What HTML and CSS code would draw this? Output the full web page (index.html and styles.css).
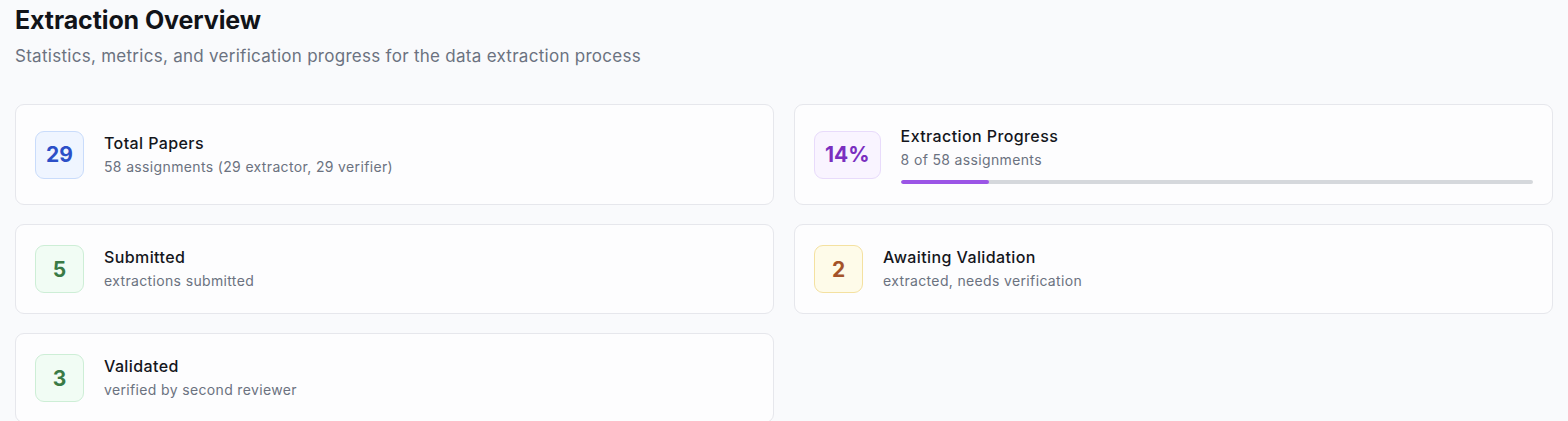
FILE: index.html
```html
<!DOCTYPE html>
<html lang="en">
<head>
    <meta charset="UTF-8">
    <meta name="viewport" content="width=device-width, initial-scale=1.0">
    <title>Extraction Overview</title>
    <link rel="stylesheet" href="styles.css">
</head>
<body>
    <div class="page">
        <!-- Header -->
        <div class="header">
            <h1>Extraction Overview</h1>
            <p class="subtitle">Statistics, metrics, and verification progress for the data extraction process</p>
        </div>

        <!-- Stat cards -->
        <div class="grid">
            <div class="card">
                <div class="badge blue">29</div>
                <div class="info">
                    <div class="label">Total Papers</div>
                    <div class="desc">58 assignments (29 extractor, 29 verifier)</div>
                </div>
            </div>

            <div class="card">
                <div class="badge purple">14%</div>
                <div class="info grow">
                    <div class="label">Extraction Progress</div>
                    <div class="desc">8 of 58 assignments</div>
                    <div class="track">
                        <div class="fill" style="width: 14%"></div>
                    </div>
                </div>
            </div>

            <div class="card">
                <div class="badge green">5</div>
                <div class="info">
                    <div class="label">Submitted</div>
                    <div class="desc">extractions submitted</div>
                </div>
            </div>

            <div class="card">
                <div class="badge amber">2</div>
                <div class="info">
                    <div class="label">Awaiting Validation</div>
                    <div class="desc">extracted, needs verification</div>
                </div>
            </div>

            <div class="card">
                <div class="badge green">3</div>
                <div class="info">
                    <div class="label">Validated</div>
                    <div class="desc">verified by second reviewer</div>
                </div>
            </div>
        </div>
    </div>
</body>
</html>
```

FILE: styles.css
```css
* {
    margin: 0;
    padding: 0;
    box-sizing: border-box;
}

body {
    background-color: #f9fafc;
    color: #111827;
    font-family: Inter, "Noto Sans", sans-serif;
}

.page {
    padding: 4px 15px 0 15px;
}

.header h1 {
    font-size: 25px;
    line-height: 32px;
    font-weight: 700;
    letter-spacing: -0.1px;
    color: #111318;
}

.subtitle {
    margin-top: 8px;
    font-size: 17px;
    line-height: 24px;
    letter-spacing: 0.28px;
    color: #6b7280;
}

.grid {
    display: grid;
    grid-template-columns: 1fr 1fr;
    gap: 19px 20px;
    margin-top: 36px;
}

.card {
    display: flex;
    align-items: center;
    gap: 20px;
    padding: 20px 19px;
    background: #fdfdfe;
    border: 1px solid #e6e7ec;
    border-radius: 9px;
}

.badge {
    flex-shrink: 0;
    min-width: 49px;
    height: 48px;
    padding: 0 10px;
    display: flex;
    align-items: center;
    justify-content: center;
    border: 1px solid;
    border-radius: 9px;
    font-size: 21px;
    font-weight: 700;
}

.badge.blue {
    background: #eff5ff;
    border-color: #c9dcfb;
    color: #2c4fc7;
}

.badge.purple {
    background: #f9f4ff;
    border-color: #e8dbfb;
    color: #7a2fc0;
}

.badge.green {
    background: #f1fcf4;
    border-color: #cdeed6;
    color: #3a7a45;
}

.badge.amber {
    background: #fefbe9;
    border-color: #f4e1a0;
    color: #a4532a;
}

.info.grow {
    flex: 1;
}

.label {
    font-size: 16px;
    line-height: 22px;
    letter-spacing: 0.4px;
    font-weight: 500;
    color: #14161c;
}

.desc {
    margin-top: 2px;
    font-size: 14px;
    line-height: 22px;
    letter-spacing: 0.35px;
    color: #6b7280;
}

.track {
    margin-top: 9px;
    height: 4px;
    background: #d5d8dc;
    border-radius: 2px;
    overflow: hidden;
}

.fill {
    height: 100%;
    background: #9b55e6;
    border-radius: 2px;
}
```
